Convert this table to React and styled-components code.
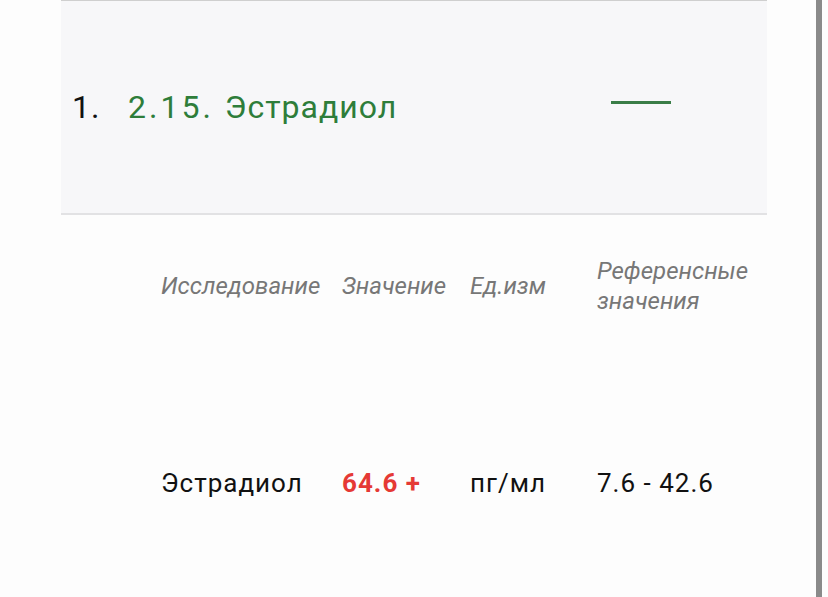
import styled, { createGlobalStyle } from "styled-components";

const GlobalStyle = createGlobalStyle`
    html, body {
        margin: 0;
        padding: 0;
        background: #fdfdfd;
        font-family: Roboto, "Liberation Sans", sans-serif;
        overflow: hidden;
    }
`;

const Page = styled.div`
    display: flex;
    flex-direction: row;
    height: 597px;
    width: 828px;
`;

const Content = styled.div`
    display: flex;
    flex-direction: column;
    width: 706px;
    margin-left: 61px;
`;

const Rail = styled.div`
    width: 6px;
    margin-left: 49px;
    background: #8a8a8a;
`;

const GroupHeader = styled.div`
    display: flex;
    flex-direction: row;
    align-items: center;
    height: 212px;
    background: #f7f7f9;
    border-top: 1px solid #cfcfcf;
    border-bottom: 2px solid #e2e2e4;
    padding-left: 11px;
`;

const Index = styled.span`
    width: 56px;
    font-size: 32px;
    line-height: 40px;
    letter-spacing: 1px;
    color: #111;
`;

const GroupTitle = styled.span`
    flex: 1;
    font-size: 32px;
    line-height: 40px;
    letter-spacing: 1px;
    color: #2e7d3a;
`;

const Code = styled.span`
    letter-spacing: 3px;
    margin-right: 11px;
`;

const Collapse = styled.span`
    width: 60px;
    height: 3px;
    margin-right: 96px;
    margin-top: -10px;
    background: #3a7d47;
`;

const Table = styled.div`
    display: grid;
    grid-template-columns: 100px 181px 128px 127px 1fr;
    align-items: center;
`;

const HeadCell = styled.div`
    padding: 41px 0 40px;
    font-size: 24px;
    font-style: italic;
    line-height: 30px;
    color: #777;
    white-space: ${(p) => (p.wrap ? "normal" : "nowrap")};
`;

const Cell = styled.div`
    padding: 112px 0 0;
    font-size: 26px;
    line-height: 30px;
    letter-spacing: 1px;
    white-space: nowrap;
    color: ${(p) => (p.alert ? "#e53935" : "#111")};
    font-weight: ${(p) => (p.alert ? 700 : 400)};
`;

const rows = [
    { name: "Эстрадиол", value: "64.6 +", unit: "пг/мл", ref: "7.6 - 42.6", alert: true },
];

const App = () => {
    return (
        <Page>
            <GlobalStyle />
            <Content>
                <GroupHeader>
                    <Index>1.</Index>
                    <GroupTitle>
                        <Code>2.15.</Code>Эстрадиол
                    </GroupTitle>
                    <Collapse />
                </GroupHeader>
                <Table>
                    <div />
                    <HeadCell>Исследование</HeadCell>
                    <HeadCell>Значение</HeadCell>
                    <HeadCell>Ед.изм</HeadCell>
                    <HeadCell wrap>Референсные значения</HeadCell>
                    {rows.map((r) => (
                        <>
                            <div />
                            <Cell>{r.name}</Cell>
                            <Cell alert={r.alert}>{r.value}</Cell>
                            <Cell>{r.unit}</Cell>
                            <Cell>{r.ref}</Cell>
                        </>
                    ))}
                </Table>
            </Content>
            <Rail />
        </Page>
    );
};

export default App;
